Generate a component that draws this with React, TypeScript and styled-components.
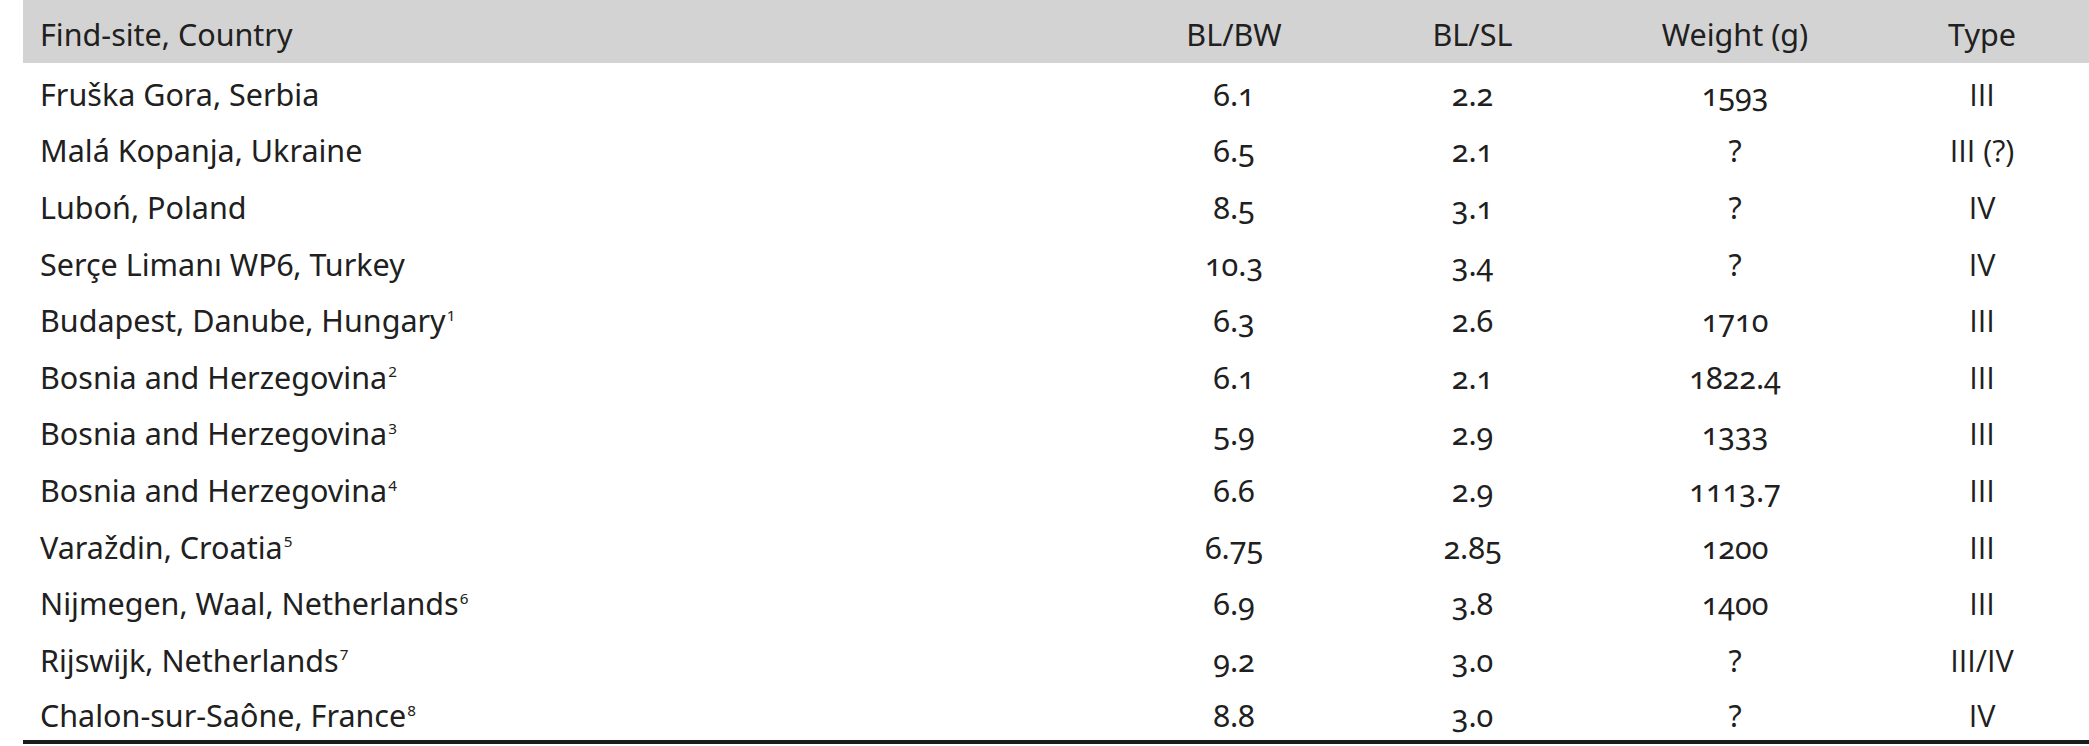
import * as React from "react";
import styled, {createGlobalStyle} from "styled-components";

const Global = createGlobalStyle`
  html, body {
    margin: 0;
    padding: 0;
    background: #ffffff;
  }
`

const Table = styled.table`
  margin-left: 23px;
  width: 2066px;
  table-layout: fixed;
  border-collapse: collapse;
  font-family: "Noto Sans", "Open Sans", sans-serif;
  font-size: 30.5px;
  color: #202020;
  font-variant-numeric: oldstyle-nums;
  border-bottom: 4px solid #1c1c1c;
`
const HeadRow = styled.tr`
  background: #d3d3d3;
  height: 63px;
`
const Row = styled.tr`
  height: 56.6px;
`
const Cell = styled.td<{ $left?: boolean; $roman?: boolean }>`
  padding: 5px 0 0 ${p => p.$left ? "17px" : "0"};
  text-align: ${p => p.$left ? "left" : "center"};
  vertical-align: middle;
  white-space: nowrap;
  font-weight: 400;
  font-family: ${p => p.$roman ? `"Open Sans", "Noto Sans", sans-serif` : "inherit"};
`
const HeadCell = styled(Cell).attrs({as: "th"})``

const Note = styled.sup`
  font-size: 0.5em;
  line-height: 0;
  vertical-align: 0.75em;
  margin-left: 1px;
  font-variant-numeric: lining-nums;
`

type Item = { site: string; note?: number; bw: string; sl: string; weight: string; type: string }

const rows: Item[] = [
    {site: "Fruška Gora, Serbia", bw: "6.1", sl: "2.2", weight: "1593", type: "III"},
    {site: "Malá Kopanja, Ukraine", bw: "6.5", sl: "2.1", weight: "?", type: "III (?)"},
    {site: "Luboń, Poland", bw: "8.5", sl: "3.1", weight: "?", type: "IV"},
    {site: "Serçe Limanı WP6, Turkey", bw: "10.3", sl: "3.4", weight: "?", type: "IV"},
    {site: "Budapest, Danube, Hungary", note: 1, bw: "6.3", sl: "2.6", weight: "1710", type: "III"},
    {site: "Bosnia and Herzegovina", note: 2, bw: "6.1", sl: "2.1", weight: "1822.4", type: "III"},
    {site: "Bosnia and Herzegovina", note: 3, bw: "5.9", sl: "2.9", weight: "1333", type: "III"},
    {site: "Bosnia and Herzegovina", note: 4, bw: "6.6", sl: "2.9", weight: "1113.7", type: "III"},
    {site: "Varaždin, Croatia", note: 5, bw: "6.75", sl: "2.85", weight: "1200", type: "III"},
    {site: "Nijmegen, Waal, Netherlands", note: 6, bw: "6.9", sl: "3.8", weight: "1400", type: "III"},
    {site: "Rijswijk, Netherlands", note: 7, bw: "9.2", sl: "3.0", weight: "?", type: "III/IV"},
    {site: "Chalon-sur-Saône, France", note: 8, bw: "8.8", sl: "3.0", weight: "?", type: "IV"},
]

export default function App() {
    return (
        <>
            <Global/>
            <Table>
                <colgroup>
                    <col style={{width: 1095}}/>
                    <col style={{width: 232}}/>
                    <col style={{width: 245}}/>
                    <col style={{width: 280}}/>
                    <col style={{width: 214}}/>
                </colgroup>
                <thead>
                <HeadRow>
                    <HeadCell $left>Find-site, Country</HeadCell>
                    <HeadCell>BL/BW</HeadCell>
                    <HeadCell>BL/SL</HeadCell>
                    <HeadCell>Weight (g)</HeadCell>
                    <HeadCell>Type</HeadCell>
                </HeadRow>
                </thead>
                <tbody>
                {rows.map((r, i) => (
                    <Row key={i}>
                        <Cell $left>{r.site}{r.note && <Note>{r.note}</Note>}</Cell>
                        <Cell>{r.bw}</Cell>
                        <Cell>{r.sl}</Cell>
                        <Cell>{r.weight}</Cell>
                        <Cell $roman>{r.type}</Cell>
                    </Row>
                ))}
                </tbody>
            </Table>
        </>
    )
}
